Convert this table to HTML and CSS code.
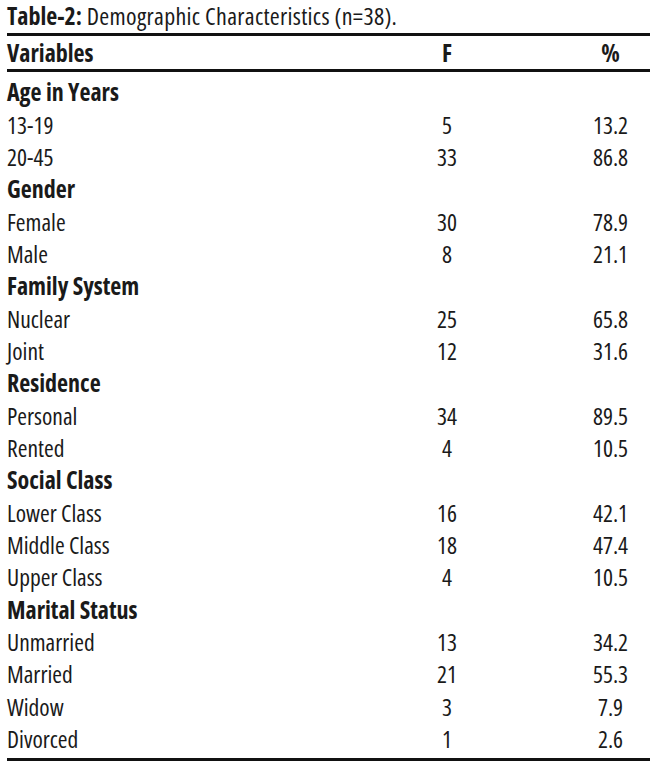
FILE: index.html
```html
<!DOCTYPE html>
<html lang="en">
<head>
<meta charset="utf-8">
<title>Table-2: Demographic Characteristics</title>
<link rel="stylesheet" href="styles.css">
</head>
<body>
<div class="wrap">
  <div class="title"><b>Table-2:</b> Demographic Characteristics (n=38).</div>
  <table class="tbl">
    <colgroup>
      <col class="c1"><col class="c2"><col class="c3">
    </colgroup>
    <thead>
      <tr><th class="var">Variables</th><th>F</th><th>%</th></tr>
    </thead>
    <tbody>
      <tr class="grp first"><td colspan="3">Age in Years</td></tr>
      <tr><td>13-19</td><td>5</td><td>13.2</td></tr>
      <tr><td>20-45</td><td>33</td><td>86.8</td></tr>
      <tr class="grp"><td colspan="3">Gender</td></tr>
      <tr><td>Female</td><td>30</td><td>78.9</td></tr>
      <tr><td>Male</td><td>8</td><td>21.1</td></tr>
      <tr class="grp"><td colspan="3">Family System</td></tr>
      <tr><td>Nuclear</td><td>25</td><td>65.8</td></tr>
      <tr><td>Joint</td><td>12</td><td>31.6</td></tr>
      <tr class="grp"><td colspan="3">Residence</td></tr>
      <tr><td>Personal</td><td>34</td><td>89.5</td></tr>
      <tr><td>Rented</td><td>4</td><td>10.5</td></tr>
      <tr class="grp"><td colspan="3">Social Class</td></tr>
      <tr><td>Lower Class</td><td>16</td><td>42.1</td></tr>
      <tr><td>Middle Class</td><td>18</td><td>47.4</td></tr>
      <tr><td>Upper Class</td><td>4</td><td>10.5</td></tr>
      <tr class="grp"><td colspan="3">Marital Status</td></tr>
      <tr><td>Unmarried</td><td>13</td><td>34.2</td></tr>
      <tr><td>Married</td><td>21</td><td>55.3</td></tr>
      <tr><td>Widow</td><td>3</td><td>7.9</td></tr>
      <tr class="last"><td>Divorced</td><td>1</td><td>2.6</td></tr>
    </tbody>
  </table>
</div>
</body>
</html>
```
FILE: styles.css
```css
html, body {
  margin: 0;
  padding: 0;
  background: #ffffff;
}
body {
  font-family: "Open Sans", "Liberation Sans", sans-serif;
  font-stretch: 75%;
  color: #1a1a1a;
}
.wrap {
  padding-left: 7px;
}
.title {
  font-size: 24px;
  line-height: 26px;
  padding-top: 3px;
  height: 30px;
  white-space: nowrap;
  letter-spacing: 0.3px;
}
.title b {
  font-weight: 700;
  letter-spacing: 0;
}
.tbl {
  width: 643px;
  border-collapse: separate;
  border-spacing: 0;
  table-layout: fixed;
  font-size: 23.5px;
}
.c1 { width: 316px; }
.c2 { width: 248px; }
.c3 { width: 79px; }
.tbl th {
  font-size: 24px;
  font-weight: 700;
  height: 33px;
  padding: 0;
  border-top: 3px solid #111;
  border-bottom: 3px solid #111;
  text-align: center;
  vertical-align: middle;
  line-height: 26px;
}
.tbl th.var {
  text-align: left;
}
.tbl td {
  height: 32.35px;
  padding: 0;
  line-height: 26px;
  vertical-align: middle;
  text-align: center;
  white-space: nowrap;
}
.tbl td:first-child {
  text-align: left;
}
.tbl tr.grp td {
  font-size: 24px;
  font-weight: 700;
}
.tbl tr.first td {
  padding-top: 4px;
}
.tbl tr.last td {
  padding-bottom: 3px;
  border-bottom: 3px solid #111;
}
```
